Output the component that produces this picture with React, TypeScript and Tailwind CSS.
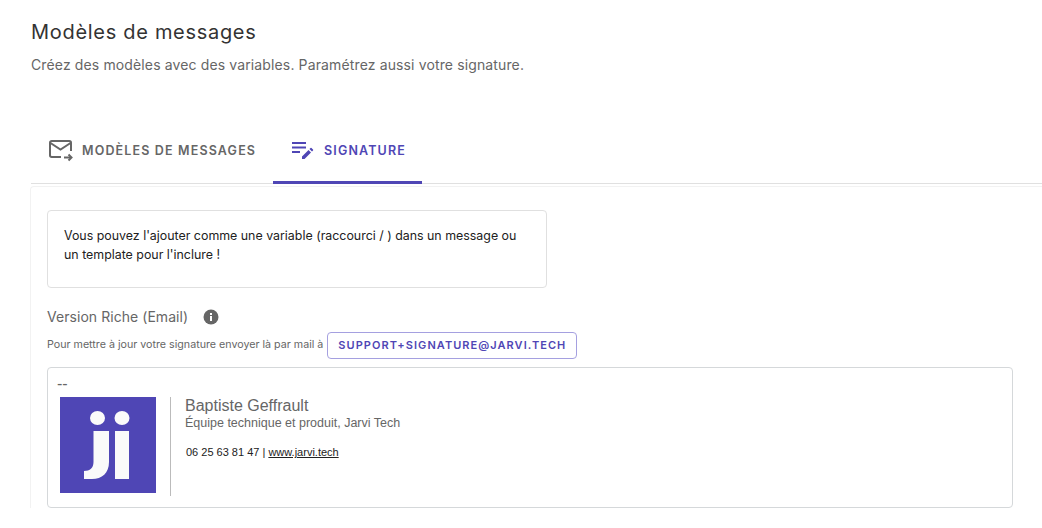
function MailIcon() {
  return (
    <svg width="24" height="22" viewBox="0 0 24 22" fill="none" stroke="#666" strokeWidth="2">
      <path d="M12 17H2.700A1.700 1.700 0 0 1 1 15.300V2.700A1.700 1.700 0 0 1 2.700 1h17.600A1.700 1.700 0 0 1 22 2.700V11" />
      <path d="M1.500 3l10 6.500 10-6.500" />
      <path d="M15 17.500h7" />
      <path d="M19.500 14.500l3 3-3 3" />
    </svg>
  );
}

function SignatureIcon() {
  return (
    <svg width="24" height="20" viewBox="0 0 24 20" fill="#4f46b5">
      <rect x="1" y="1" width="14" height="2" />
      <rect x="1" y="5.500" width="14" height="2" />
      <rect x="1" y="10" width="8" height="2" />
      <path d="M11 15.500V18h2.500l6.500-6.500-2.500-2.500zM21 10.500l1-1a.7.7 0 0 0 0-1l-1.500-1.500a.7.7 0 0 0-1 0l-1 1z" />
    </svg>
  );
}

function InfoDot() {
  return (
    <svg width="16" height="16" viewBox="0 0 16 16">
      <circle cx="8" cy="8" r="7.500" fill="#666" />
      <rect x="7" y="7" width="2" height="5" fill="#fff" />
      <rect x="7" y="4" width="2" height="2" fill="#fff" />
    </svg>
  );
}

export default function App() {
  return (
    <div className="h-[528px] overflow-hidden bg-white pl-[31px] font-['Inter',sans-serif]">
      <h1 className="pt-[19px] text-[20px] leading-[26px] tracking-[0.7px] text-[#333]">Modèles de messages</h1>
      <p className="mt-[10px] text-[14px] leading-[20px] tracking-[0.13px] text-[#666]">
        Créez des modèles avec des variables. Paramétrez aussi votre signature.
      </p>

      <div className="mt-[43px] flex h-[66px] border-b border-[#e0e0e0]">
        <div className="flex w-[242px] items-center pl-[18px] pt-[1px]">
          <MailIcon />
          <span className="ml-[9px] pt-[1px] text-[12.500px] font-semibold tracking-[1.150px] text-[#666]">MODÈLES DE MESSAGES</span>
        </div>
        <div className="flex h-[66px] w-[149px] items-center border-b-[3px] border-[#4f46b5] pl-[18px] pt-[3px]">
          <SignatureIcon />
          <span className="ml-[9px] text-[12.500px] font-semibold tracking-[1.150px] text-[#4f46b5]">SIGNATURE</span>
        </div>
      </div>

      <div className="-ml-px mt-[2px] rounded-tl border-l border-t border-[#f2f2f2] pl-[16px] pt-[23px]">
        <div className="h-[78px] w-[500px] rounded border border-[#e0e0e0] px-[16px] pt-[15px] text-[12.400px] leading-[19px] text-[#212121]">
          Vous pouvez l'ajouter comme une variable (raccourci / ) dans un message ou un template pour l'inclure !
        </div>

        <div className="mt-[19px] flex items-center">
          <span className="text-[14px] leading-[20px] tracking-[0.05px] text-[#666]">Version Riche (Email)</span>
          <span className="ml-[15px]"><InfoDot /></span>
        </div>

        <div className="mt-[5px] flex items-center">
          <span className="text-[10.700px] text-[#666]">Pour mettre à jour votre signature envoyer là par mail à</span>
          <span className="ml-[4px] flex h-[27px] w-[250px] items-center justify-center rounded border border-[#a5a0e0] text-[11px] font-semibold tracking-[1.050px] text-[#4f46b5]">
            SUPPORT+SIGNATURE@JARVI.TECH
          </span>
        </div>

        <div className="mt-[8px] h-[141px] w-[966px] rounded border border-[#d5d8da] pl-[9px] pt-[8px] font-['Liberation_Sans',sans-serif]">
          <div className="text-[16px] leading-[15px] text-[#666]">--</div>
          <div className="mt-[6px] flex">
            <svg className="ml-[3px]" width="96" height="96" viewBox="0 0 96 96">
              <rect width="96" height="96" fill="#4f46b5" />
              <g fill="#fafafa">
                <ellipse cx="37.500" cy="21" rx="7.500" ry="7" />
                <ellipse cx="62" cy="21" rx="7.500" ry="7" />
                <path d="M33.500 34H49v31c0 11-7 17-17 17h-8v-8c6 0 9.500-3 9.500-9z" />
                <rect x="55" y="34" width="14" height="48" />
              </g>
            </svg>
            <div className="ml-[14px] h-[99px] border-l border-[#bbb] pl-[14px]">
              <div className="text-[16px] leading-[17px] text-[#666]">Baptiste Geffrault</div>
              <div className="mt-[1px] text-[12.500px] leading-[16px] text-[#666]">Équipe technique et produit, Jarvi Tech</div>
              <div className="mt-[14px] pl-[1px] text-[11px] leading-[14px] text-[#222]">
                06 25 63 81 47 | <span className="underline">www.jarvi.tech</span>
              </div>
            </div>
          </div>
        </div>
      </div>
    </div>
  );
}
